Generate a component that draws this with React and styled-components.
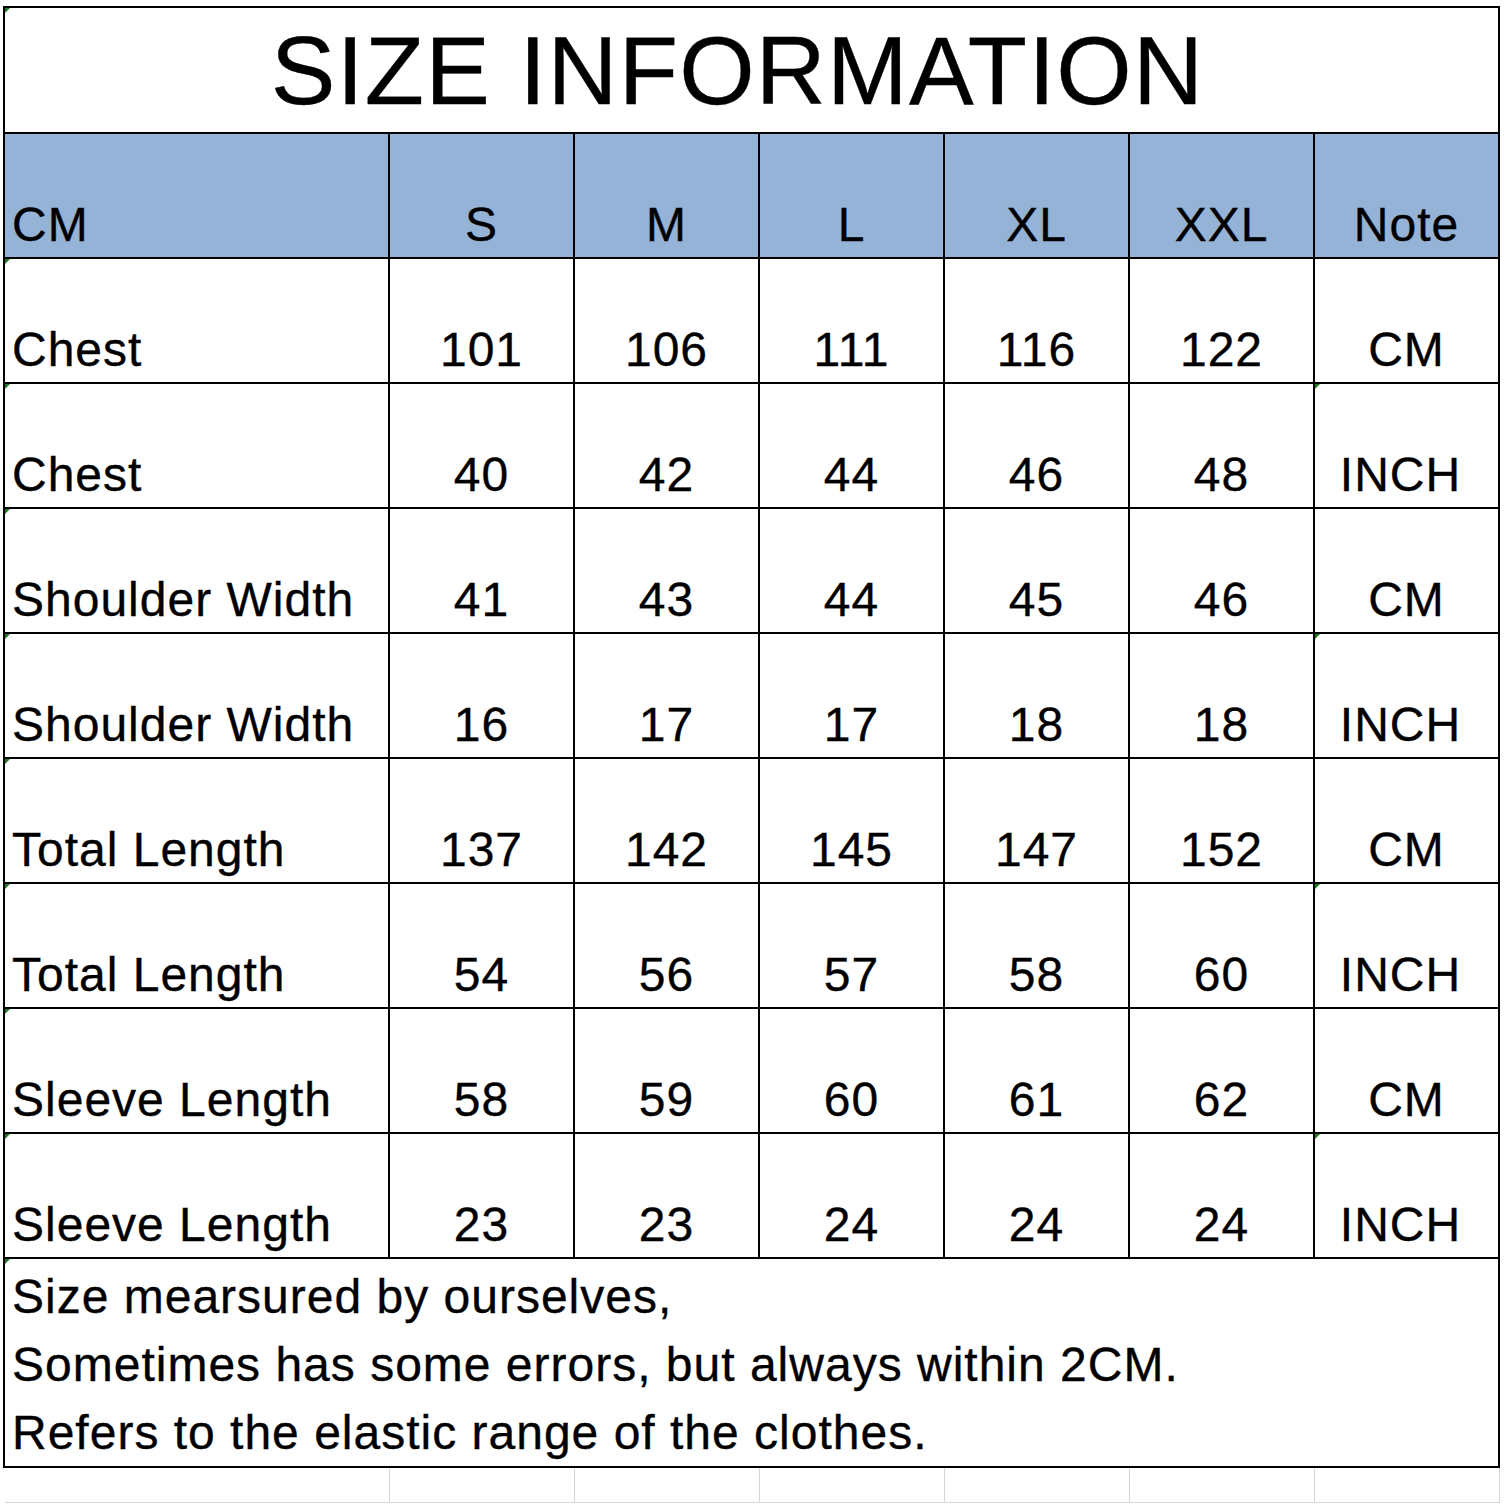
import React from 'react'
import styled, { createGlobalStyle, css } from 'styled-components'

const rows = [
  { label: 'Chest', values: ['101', '106', '111', '116', '122'], note: 'CM' },
  { label: 'Chest', values: ['40', '42', '44', '46', '48'], note: 'INCH' },
  { label: 'Shoulder Width', values: ['41', '43', '44', '45', '46'], note: 'CM' },
  { label: 'Shoulder Width', values: ['16', '17', '17', '18', '18'], note: 'INCH' },
  { label: 'Total Length', values: ['137', '142', '145', '147', '152'], note: 'CM' },
  { label: 'Total Length', values: ['54', '56', '57', '58', '60'], note: 'INCH' },
  { label: 'Sleeve Length', values: ['58', '59', '60', '61', '62'], note: 'CM' },
  { label: 'Sleeve Length', values: ['23', '23', '24', '24', '24'], note: 'INCH' },
]

const sizes = ['S', 'M', 'L', 'XL', 'XXL']

const notes = [
  'Size mearsured by ourselves,',
  'Sometimes has some errors, but always within 2CM.',
  'Refers to the elastic range of the clothes.',
]

const SizeChart = () => {
  return (
    <>
      <GlobalStyle />
      <Page>
        <Sheet>
          <TitleCell $flag>SIZE INFORMATION</TitleCell>

          <Cell $head $left>CM</Cell>
          {sizes.map((s) => (
            <Cell key={s} $head>{s}</Cell>
          ))}
          <Cell $head $last>Note</Cell>

          {rows.map((row, i) => (
            <React.Fragment key={i}>
              <Cell $left $flag>{row.label}</Cell>
              {row.values.map((v, j) => (
                <Cell key={j}>{v}</Cell>
              ))}
              <Cell $last $flag={row.note === 'INCH'} $shift={row.note === 'INCH'}>
                {row.note}
              </Cell>
            </React.Fragment>
          ))}

          <NotesCell $flag>
            {notes.map((n) => (
              <NoteLine key={n}>{n}</NoteLine>
            ))}
          </NotesCell>
        </Sheet>

        <Gridlines>
          {Array.from({ length: 7 }).map((_, i) => (
            <GridCell key={i} />
          ))}
        </Gridlines>
      </Page>
    </>
  )
}

// --- STYLED COMPONENTS ---

const GlobalStyle = createGlobalStyle`
  html, body {
    margin: 0;
    padding: 0;
    background: #fff;
  }
  body {
    font-family: 'Liberation Sans', Arial, sans-serif;
    color: #000;
    -webkit-text-stroke: 0.35px #000;
  }
`

const COLS = '385px repeat(6, 185px)'

const Page = styled.div`
  width: 1504px;
  height: 1504px;
  padding: 6px 0 0 3px;
  box-sizing: border-box;
  overflow: hidden;
`

const Sheet = styled.div`
  display: grid;
  grid-template-columns: ${COLS};
  width: max-content;
  border-top: 2px solid #000;
  border-left: 2px solid #000;
`

const flagMark = css`
  &::before {
    content: '';
    position: absolute;
    top: 0;
    left: 0;
    width: 0;
    height: 0;
    border-top: 5px solid #1f7a1f;
    border-right: 5px solid transparent;
  }
`

const Cell = styled.div`
  position: relative;
  box-sizing: border-box;
  height: 125px;
  display: flex;
  align-items: flex-end;
  justify-content: ${(p) => (p.$left ? 'flex-start' : 'center')};
  padding: ${(p) => (p.$left ? '0 0 8px 7px' : p.$shift ? '0 12px 8px 0' : '0 0 8px')};
  border-right: 2px solid #000;
  border-bottom: 2px solid #000;
  background: ${(p) => (p.$head ? '#95b3d7' : '#fff')};
  font-size: 48px;
  line-height: 1;
  letter-spacing: 1px;
  white-space: nowrap;
  ${(p) => p.$flag && flagMark}
`

const TitleCell = styled.div`
  position: relative;
  grid-column: 1 / -1;
  box-sizing: border-box;
  height: 126px;
  display: flex;
  align-items: flex-end;
  justify-content: center;
  padding: 0 28px 13px 0;
  border-right: 2px solid #000;
  border-bottom: 2px solid #000;
  font-size: 97px;
  line-height: 1;
  letter-spacing: 1.2px;
  white-space: nowrap;
  ${(p) => p.$flag && flagMark}
`

const NotesCell = styled.div`
  position: relative;
  grid-column: 1 / -1;
  box-sizing: border-box;
  height: 209px;
  padding: 4px 0 0 7px;
  border-right: 2px solid #000;
  border-bottom: 2px solid #000;
  ${(p) => p.$flag && flagMark}
`

const NoteLine = styled.div`
  font-size: 48px;
  line-height: 68px;
  letter-spacing: 1px;
  white-space: nowrap;
`

const Gridlines = styled.div`
  display: grid;
  grid-template-columns: ${COLS};
  width: max-content;
  padding-left: 2px;
`

const GridCell = styled.div`
  height: 34px;
  border-right: 1px solid #d4d4dc;
  border-bottom: 1px solid #d4d4dc;
`

export default SizeChart
